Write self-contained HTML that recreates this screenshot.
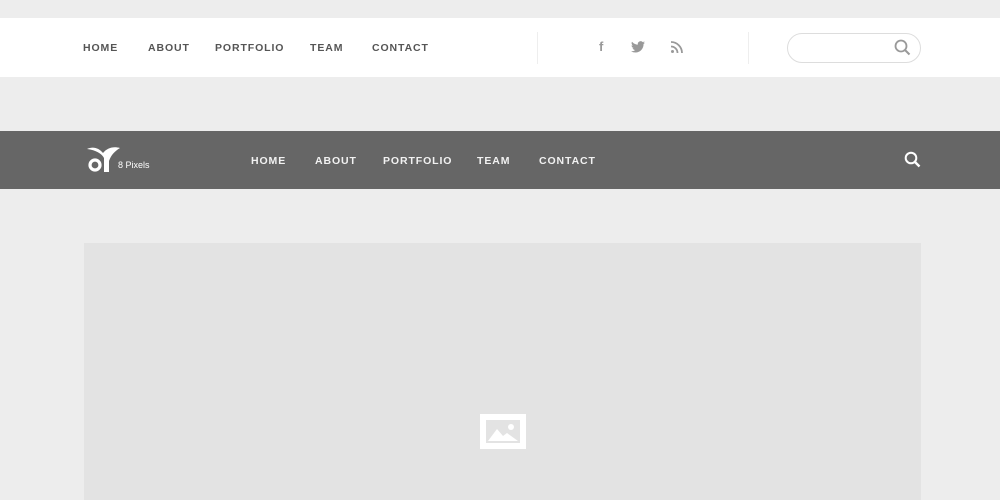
<!DOCTYPE html>
<html><head><style>
*{margin:0;padding:0;box-sizing:border-box}
body{width:1000px;height:500px;background:#ededed;font-family:"Liberation Sans",sans-serif;position:relative;overflow:hidden}
.top{position:absolute;top:18px;left:0;width:1000px;height:59px;background:#fff}
.nav a{position:absolute;font-size:10.5px;font-weight:bold;letter-spacing:0.9px;color:#555;text-decoration:none}
.bar{position:absolute;top:131px;left:0;width:1000px;height:58px;background:#666}
.sep{position:absolute;top:32px;width:1px;height:32px;background:#eee}
.img{position:absolute;left:84px;top:243px;width:837px;height:257px;background:#e3e3e3}
</style></head><body>
<div class="top"></div>
<div class="nav">
<a style="left:83px;top:42px">HOME</a><a style="left:148px;top:42px">ABOUT</a><a style="left:215px;top:42px">PORTFOLIO</a><a style="left:310px;top:42px">TEAM</a><a style="left:372px;top:42px">CONTACT</a>
</div>
<div class="sep" style="left:537px"></div><div class="sep" style="left:748px"></div>
<div style="position:absolute;left:599px;top:39px;font-size:13px;font-weight:bold;color:#999">f</div>
<svg style="position:absolute;left:631px;top:41px" width="14" height="12" viewBox="0 0 24 20"><path fill="#999" d="M24 2.4a10 10 0 0 1-2.8.8A5 5 0 0 0 23.3.4a10 10 0 0 1-3.1 1.2A4.9 4.9 0 0 0 11.8 6 14 14 0 0 1 1.7.9a4.9 4.9 0 0 0 1.5 6.6A4.9 4.9 0 0 1 1 6.9a4.9 4.9 0 0 0 3.9 4.8 5 5 0 0 1-2.2.1 4.9 4.9 0 0 0 4.6 3.4A9.9 9.9 0 0 1 0 17.3 14 14 0 0 0 7.5 19.5c9 0 14-7.5 14-14v-.6A10 10 0 0 0 24 2.4z"/></svg>
<svg style="position:absolute;left:671px;top:41px" width="12" height="12" viewBox="0 0 12 12"><circle cx="1.5" cy="10.5" r="1.5" fill="#999"/><path d="M0 5.5a6.5 6.5 0 0 1 6.5 6.5M0 1a11 11 0 0 1 11 11" stroke="#999" stroke-width="1.8" fill="none"/></svg>
<div style="position:absolute;left:787px;top:33px;width:134px;height:30px;border:1px solid #ddd;border-radius:15px"></div>
<svg style="position:absolute;left:894px;top:39px" width="17" height="17" viewBox="0 0 17 17"><circle cx="7" cy="7" r="5.5" stroke="#999" stroke-width="1.8" fill="none"/><path d="M11 11l4.5 4.5" stroke="#999" stroke-width="2"/></svg>
<div class="bar"></div>
<div class="nav">
<a style="left:251px;top:155px;color:#f2f2f2">HOME</a><a style="left:315px;top:155px;color:#f2f2f2">ABOUT</a><a style="left:383px;top:155px;color:#f2f2f2">PORTFOLIO</a><a style="left:477px;top:155px;color:#f2f2f2">TEAM</a><a style="left:539px;top:155px;color:#f2f2f2">CONTACT</a>
</div>
<svg style="position:absolute;left:86px;top:146px" width="40" height="28" viewBox="0 0 40 28"><path d="M1 3c6-3 12-1 16 4 4-5 10-7 17-5-5 3-9 7-11 13v11h-5V12C16 8 10 4 1 3z" fill="#fff"/><circle cx="9" cy="19" r="5" stroke="#fff" stroke-width="3.2" fill="none"/></svg>
<div style="position:absolute;left:118px;top:160px;font-size:9px;color:#fff">8 Pixels</div>
<svg style="position:absolute;left:904px;top:151px" width="17" height="17" viewBox="0 0 17 17"><circle cx="7" cy="7" r="5.3" stroke="#fff" stroke-width="2" fill="none"/><path d="M11 11l4.5 4.5" stroke="#fff" stroke-width="2.4"/></svg>
<div class="img"></div>
<div style="position:absolute;left:480px;top:414px;width:46px;height:35px;background:#fff"></div>
<div style="position:absolute;left:486px;top:420px;width:34px;height:23px;background:#e3e3e3"></div>
<svg style="position:absolute;left:486px;top:420px" width="34" height="23"><path d="M2 21l9-12 6 7 4-3 11 8z" fill="#fff"/><circle cx="25" cy="7" r="3" fill="#fff"/></svg>
</body></html>
